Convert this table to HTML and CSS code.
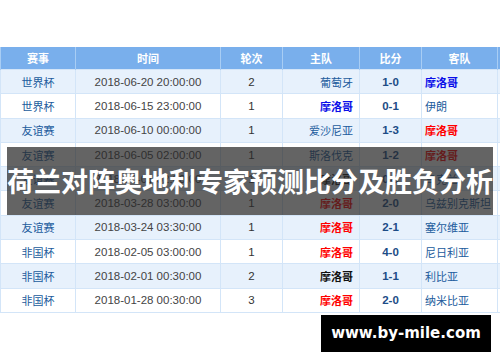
FILE: index.html
```
<!DOCTYPE html>
<html lang="zh-CN">
<head>
    <meta charset="utf-8">
    <title>荷兰对阵奥地利专家预测比分及胜负分析</title>
    <link rel="stylesheet" href="styles.css">
</head>
<body>
    <div class="page">
        <table class="matches">
            <thead>
                <tr>
                    <th class="c-league">赛事</th>
                    <th class="c-time">时间</th>
                    <th class="c-round">轮次</th>
                    <th class="c-home">主队</th>
                    <th class="c-score">比分</th>
                    <th class="c-away">客队</th>
                    <th class="c-extra"></th>
                </tr>
            </thead>
            <tbody>
                <tr>
                    <td class="league">世界杯</td>
                    <td class="time">2018-06-20 20:00:00</td>
                    <td class="round">2</td>
                    <td class="home">葡萄牙</td>
                    <td class="score">1-0</td>
                    <td class="away"><b class="blue">摩洛哥</b></td>
                    <td></td>
                </tr>
                <tr>
                    <td class="league">世界杯</td>
                    <td class="time">2018-06-15 23:00:00</td>
                    <td class="round">1</td>
                    <td class="home"><b class="blue">摩洛哥</b></td>
                    <td class="score">0-1</td>
                    <td class="away">伊朗</td>
                    <td></td>
                </tr>
                <tr>
                    <td class="league">友谊赛</td>
                    <td class="time">2018-06-10 00:00:00</td>
                    <td class="round">1</td>
                    <td class="home">爱沙尼亚</td>
                    <td class="score">1-3</td>
                    <td class="away"><b class="red">摩洛哥</b></td>
                    <td></td>
                </tr>
                <tr>
                    <td class="league">友谊赛</td>
                    <td class="time">2018-06-05 02:00:00</td>
                    <td class="round">1</td>
                    <td class="home">斯洛伐克</td>
                    <td class="score">1-2</td>
                    <td class="away"><b class="red">摩洛哥</b></td>
                    <td></td>
                </tr>
                <tr>
                    <td class="league">友谊赛</td>
                    <td class="time">2018-06-01 02:00:00</td>
                    <td class="round">1</td>
                    <td class="home"><b class="black">摩洛哥</b></td>
                    <td class="score">0-0</td>
                    <td class="away">乌克兰</td>
                    <td></td>
                </tr>
                <tr>
                    <td class="league">友谊赛</td>
                    <td class="time">2018-03-28 03:00:00</td>
                    <td class="round">1</td>
                    <td class="home"><b class="red">摩洛哥</b></td>
                    <td class="score">2-0</td>
                    <td class="away">乌兹别克斯坦</td>
                    <td></td>
                </tr>
                <tr>
                    <td class="league">友谊赛</td>
                    <td class="time">2018-03-24 03:30:00</td>
                    <td class="round">1</td>
                    <td class="home"><b class="red">摩洛哥</b></td>
                    <td class="score">2-1</td>
                    <td class="away">塞尔维亚</td>
                    <td></td>
                </tr>
                <tr>
                    <td class="league">非国杯</td>
                    <td class="time">2018-02-05 03:00:00</td>
                    <td class="round">1</td>
                    <td class="home"><b class="red">摩洛哥</b></td>
                    <td class="score">4-0</td>
                    <td class="away">尼日利亚</td>
                    <td></td>
                </tr>
                <tr>
                    <td class="league">非国杯</td>
                    <td class="time">2018-02-01 00:30:00</td>
                    <td class="round">2</td>
                    <td class="home"><b class="black">摩洛哥</b></td>
                    <td class="score">1-1</td>
                    <td class="away">利比亚</td>
                    <td></td>
                </tr>
                <tr>
                    <td class="league">非国杯</td>
                    <td class="time">2018-01-28 00:30:00</td>
                    <td class="round">3</td>
                    <td class="home"><b class="red">摩洛哥</b></td>
                    <td class="score">2-0</td>
                    <td class="away">纳米比亚</td>
                    <td></td>
                </tr>
            </tbody>
        </table>

        <div class="title-bar">荷兰对阵奥地利专家预测比分及胜负分析</div>
        <div class="site-mark">www.by-mile.com</div>
    </div>
</body>
</html>
```

FILE: styles.css
```
body {
    margin: 0;
    background-color: white;
    overflow: hidden;
    font-family: "Liberation Sans", "Noto Sans CJK SC", sans-serif;
}

.page {
    position: relative;
    width: 500px;
    height: 362px;
    padding-top: 47px;
    box-sizing: border-box;
    overflow: hidden;
}

.matches {
    border-collapse: collapse;
    table-layout: fixed;
    width: 560px;
    font-size: 11px;
}

.matches th {
    height: 22px;
    padding: 0;
    background-color: #79afec;
    color: white;
    font-weight: bold;
    font-family: "Noto Sans CJK SC", sans-serif;
    font-size: 11px;
    border-left: 1px solid #a8cdf4;
    border-right: 1px solid #a8cdf4;
    text-align: center;
}

/* widths leave room for the collapsed 1px borders */
.c-league { width: 74px; }
.c-time { width: 144px; }
.c-round { width: 61px; }
.c-home { width: 76px; }
.c-score { width: 61px; }
.c-away { width: 75px; }
.c-extra { width: 62px; }

.matches td {
    height: 23.3px;
    padding: 0;
    border: 1px solid #d3e5f8;
    color: #333;
    white-space: nowrap;
    overflow: hidden;
}

.matches tbody tr:nth-child(odd) td {
    background-color: #e7f1fc;
}

.matches tbody tr:nth-child(even) td {
    background-color: white;
}

.league {
    text-align: center;
    color: #215b9c !important;
}

.time {
    text-align: center;
    font-size: 11.5px;
    color: #444 !important;
}

.round {
    text-align: center;
    font-size: 11.5px;
}

.home {
    text-align: right;
    padding-right: 6px !important;
    color: #215b9c !important;
}

.score {
    text-align: center;
    font-weight: bold;
    font-size: 11.5px;
    color: #1c4c86 !important;
}

.away {
    text-align: left;
    padding-left: 3px !important;
    color: #215b9c !important;
}

.blue { color: #0a0ee8; }
.red { color: #f00; }
.black { color: #111; }

.title-bar {
    position: absolute;
    left: 7px;
    top: 147px;
    width: 486px;
    height: 68px;
    background-color: rgba(40, 40, 40, 0.72);
    color: white;
    font-family: "Noto Sans CJK SC", sans-serif;
    font-weight: bold;
    font-size: 27px;
    line-height: 68px;
    text-align: center;
    white-space: nowrap;
}

.site-mark {
    position: absolute;
    left: 321px;
    top: 315px;
    width: 170px;
    height: 37px;
    background-color: black;
    color: white;
    font-family: "DejaVu Sans", sans-serif;
    font-weight: bold;
    font-size: 15px;
    line-height: 37px;
    text-align: center;
}
```
